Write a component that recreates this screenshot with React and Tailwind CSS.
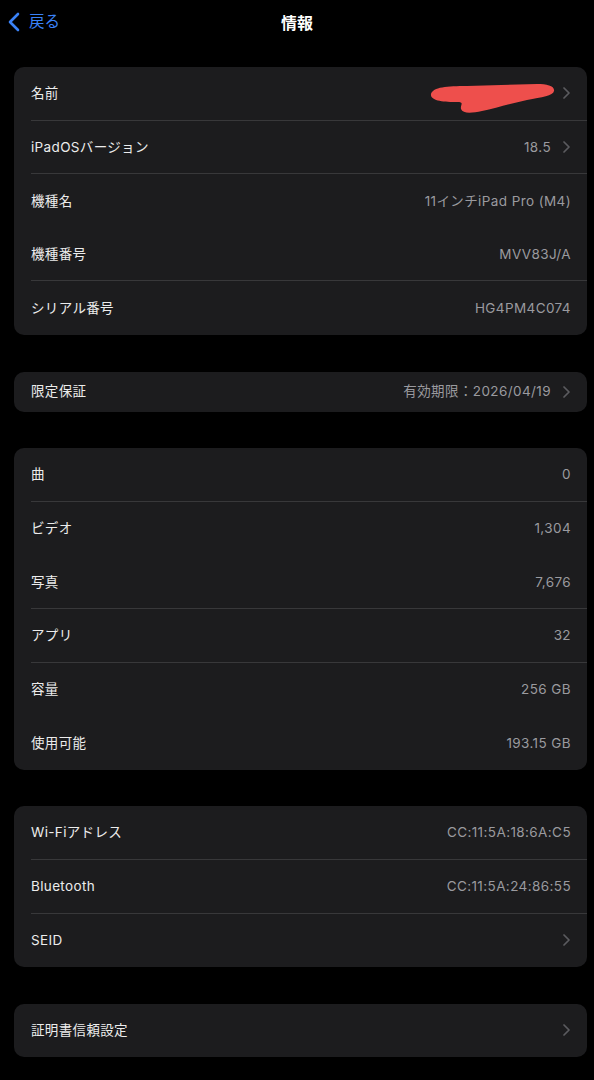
import React from 'react'

const font = { fontFamily: '"Inter", "Noto Sans CJK JP", sans-serif' }

function Chevron() {
  return (
    <svg width="7" height="12" viewBox="0 0 7 12" className="shrink-0 ml-[12px]">
      <path d="M1 1 L6 6 L1 11" fill="none" stroke="#5b5b5f" strokeWidth="1.7" strokeLinecap="round" strokeLinejoin="round" />
    </svg>
  )
}

function Scribble() {
  return (
    <svg width="132" height="36" viewBox="0 0 132 36" className="absolute left-[0px] top-[14px]">
      <path
        d="M4 13 C6 6 20 5 40 5 L110 3 C120 3 128 5 127 10 C126 15 115 16 100 19 C85 22 70 27 55 30 C45 32 36 33 34 28 C33 24 38 21 30 21 C18 21 3 20 4 13 Z"
        fill="#ee4f4c"
      />
    </svg>
  )
}

function Row({ label, value, chevron, sep, tall = true, redacted }) {
  return (
    <div className="pl-[17px]">
      <div className={`flex items-center ${tall ? 'h-[53.6px]' : 'h-[40px]'} ${chevron ? 'pr-[17px]' : 'pr-[16px]'} ${sep ? 'border-b border-[#38383a]' : ''}`}>
        <span className="text-[13.5px] tracking-[0.35px] text-[#ececec] flex-1">{label}</span>
        {redacted && <span className="relative w-[124px] h-full"><Scribble /></span>}
        {value && <span className="text-[13.5px] tracking-[0.4px] text-[#9a9a9f]">{value}</span>}
        {chevron && <Chevron />}
      </div>
    </div>
  )
}

function Card({ children }) {
  return <div className="ml-[14px] mr-[7px] bg-[#1c1c1e] rounded-[10px] overflow-hidden">{children}</div>
}

export default function App() {
  return (
    <div className="bg-black min-h-[1080px] w-[594px]" style={font}>
      {/* ヘッダー */}
      <div className="relative h-[45px] flex items-center justify-center">
        <div className="absolute left-[8px] top-[12px] flex items-center">
          <svg width="12" height="20" viewBox="0 0 12 20">
            <path d="M10 2 L2 10 L10 18" fill="none" stroke="#3a82f7" strokeWidth="2.6" strokeLinecap="round" strokeLinejoin="round" />
          </svg>
          <span className="ml-[9px] text-[15.5px] text-[#3a82f7] leading-none">戻る</span>
        </div>
        <span className="text-[16px] font-semibold text-white">情報</span>
      </div>

      <div className="pt-[22px] flex flex-col gap-[36.6px]">
        <Card>
          <Row label="名前" chevron sep redacted />
          <Row label="iPadOSバージョン" value="18.5" chevron sep />
          <Row label="機種名" value="11インチiPad Pro (M4)" />
          <Row label="機種番号" value="MVV83J/A" sep />
          <Row label="シリアル番号" value="HG4PM4C074" />
        </Card>

        <Card>
          <Row label="限定保証" value="有効期限：2026/04/19" chevron tall={false} />
        </Card>

        <Card>
          <Row label="曲" value="0" sep />
          <Row label="ビデオ" value="1,304" />
          <Row label="写真" value="7,676" sep />
          <Row label="アプリ" value="32" sep />
          <Row label="容量" value="256 GB" />
          <Row label="使用可能" value="193.15 GB" />
        </Card>

        <Card>
          <Row label="Wi-Fiアドレス" value="CC:11:5A:18:6A:C5" sep />
          <Row label="Bluetooth" value="CC:11:5A:24:86:55" sep />
          <Row label="SEID" chevron />
        </Card>

        <Card>
          <Row label="証明書信頼設定" chevron />
        </Card>
      </div>
    </div>
  )
}
